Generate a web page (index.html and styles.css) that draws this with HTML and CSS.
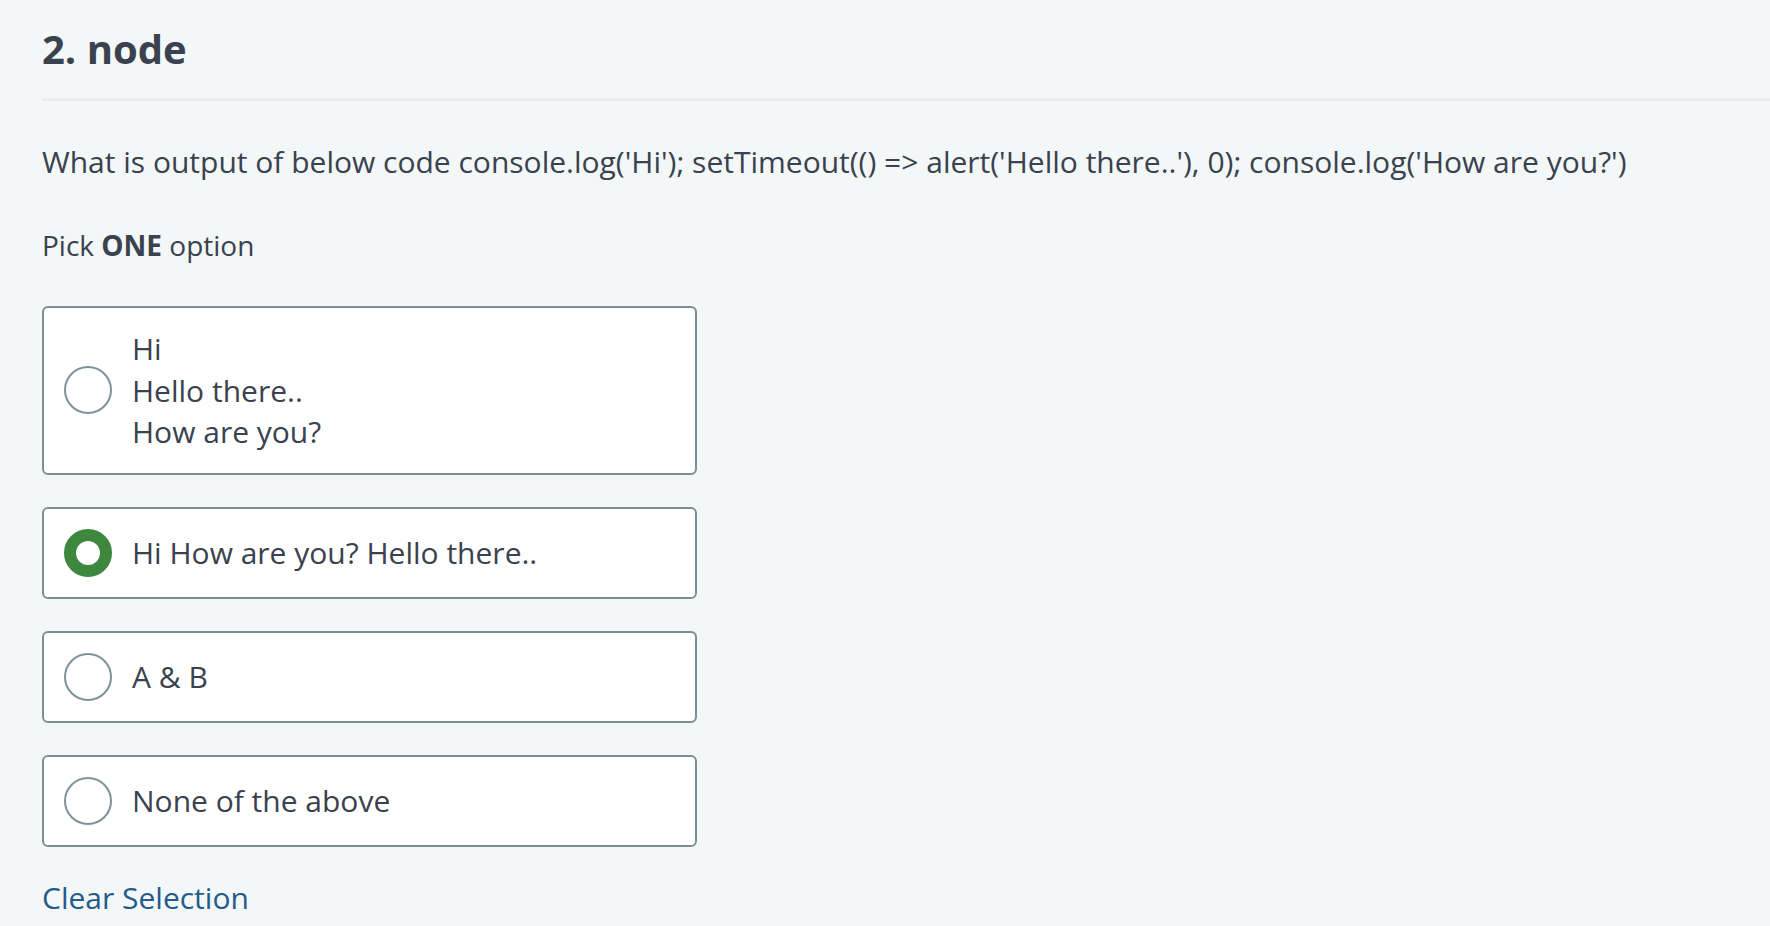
FILE: index.html
```html
<!DOCTYPE html>
<html lang="en">
<head>
<meta charset="utf-8">
<title>2. node</title>
<link rel="stylesheet" href="styles.css">
</head>
<body>
<main class="page">
  <h1 class="q-title">2. node</h1>
  <p class="q-text">What is output of below code console.log('Hi'); setTimeout(() =&gt; alert('Hello there..'), 0); console.log('How are you?')</p>
  <p class="q-hint">Pick <strong>ONE</strong> option</p>
  <div class="options">
    <label class="option">
      <span class="radio"></span>
      <span class="option-text">Hi<br>Hello there..<br>How are you?</span>
    </label>
    <label class="option">
      <span class="radio radio-checked"></span>
      <span class="option-text">Hi How are you? Hello there..</span>
    </label>
    <label class="option">
      <span class="radio"></span>
      <span class="option-text">A &amp; B</span>
    </label>
    <label class="option">
      <span class="radio"></span>
      <span class="option-text">None of the above</span>
    </label>
    <a class="clear-link" href="#">Clear Selection</a>
  </div>
</main>
</body>
</html>
```
FILE: styles.css
```css
html, body {
  margin: 0;
  padding: 0;
}
body {
  background: #f3f7f7;
  color: #39424e;
  font-family: "Open Sans", "Noto Sans", sans-serif;
  font-size: 30px;
  line-height: 41.5px;
}
.page {
  padding-left: 42px;
}
.q-title {
  margin: 0;
  padding: 24px 0 24px;
  font-size: 40px;
  line-height: 50px;
  font-weight: 700;
  border-bottom: 3px solid #e8ecee;
}
.q-text {
  margin: 40px 0 0;
}
.q-hint {
  margin: 42px 0 0;
  font-size: 28px;
}
.q-hint strong {
  font-weight: 700;
}
.options {
  margin-top: 40px;
  display: flex;
  flex-direction: column;
  align-items: flex-start;
  gap: 32px;
}
.option {
  box-sizing: border-box;
  width: 655px;
  display: flex;
  align-items: center;
  gap: 20px;
  padding: 20px;
  background: #ffffff;
  border: 2px solid #7b8f95;
  border-radius: 6px;
}
.radio {
  flex: none;
  box-sizing: border-box;
  width: 48px;
  height: 48px;
  border-radius: 50%;
  border: 2px solid #7b9399;
  background: #ffffff;
}
.radio-checked {
  border: 12px solid #3d873f;
}
.clear-link {
  margin-top: -2px;
  color: #255b8b;
  text-decoration: none;
}
```
